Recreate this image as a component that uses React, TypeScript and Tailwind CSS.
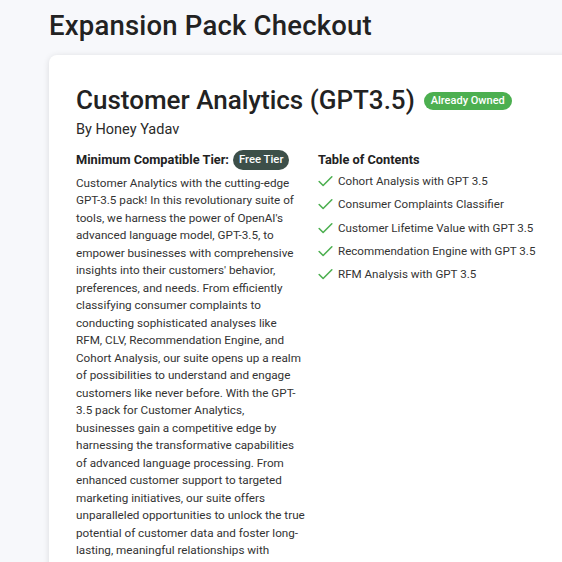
import React from 'react'
import { Check } from 'lucide-react'

const contents = [
  'Cohort Analysis with GPT 3.5',
  'Consumer Complaints Classifier',
  'Customer Lifetime Value with GPT 3.5',
  'Recommendation Engine with GPT 3.5',
  'RFM Analysis with GPT 3.5',
]

// broken where the original layout wraps
const descriptionLines = [
  'Customer Analytics with the cutting-edge',
  'GPT-3.5 pack! In this revolutionary suite of',
  "tools, we harness the power of OpenAI's",
  'advanced language model, GPT-3.5, to',
  'empower businesses with comprehensive',
  "insights into their customers' behavior,",
  'preferences, and needs. From efficiently',
  'classifying consumer complaints to',
  'conducting sophisticated analyses like',
  'RFM, CLV, Recommendation Engine, and',
  'Cohort Analysis, our suite opens up a realm',
  'of possibilities to understand and engage',
  'customers like never before. With the GPT-',
  '3.5 pack for Customer Analytics,',
  'businesses gain a competitive edge by',
  'harnessing the transformative capabilities',
  'of advanced language processing. From',
  'enhanced customer support to targeted',
  'marketing initiatives, our suite offers',
  'unparalleled opportunities to unlock the true',
  'potential of customer data and foster long-',
  'lasting, meaningful relationships with',
  'their customers.',
]

export default function App() {
  return (
    <div
      className="h-[562px] w-[562px] overflow-hidden bg-[#f7f8fb] text-[#1f1f1f]"
      style={{ fontFamily: 'Roboto, "Noto Sans", sans-serif' }}
    >
      <div className="pl-[49px] pt-[8px]">
        <h1 className="text-[27.5px] font-medium leading-[36px] tracking-[0.2px] text-[#222]">
          Expansion Pack Checkout
        </h1>

        {/* Card */}
        <div className="mt-[11px] w-[540px] rounded-lg bg-white px-[27px] pt-[28px] pb-8 shadow-[0_1px_6px_rgba(0,0,0,0.12)]">
          <div className="flex items-center gap-[9px]">
            <h2 className="text-[26px] font-medium leading-[34px] text-[#222]">
              Customer Analytics (GPT3.5)
            </h2>
            <span className="mt-[2px] rounded-full bg-[#4caf50] px-[7px] py-[2px] text-[11px] font-medium leading-[14px] text-white">
              Already Owned
            </span>
          </div>
          <p className="mt-[3px] text-[14.5px] leading-[20px] text-[#2a2a2a]">By Honey Yadav</p>

          <div className="mt-[10px] flex gap-[12px]">
            <div className="w-[230px] shrink-0">
              <div className="flex items-center gap-1">
                <span className="text-[12.8px] font-bold text-[#222]">Minimum Compatible Tier:</span>
                <span className="rounded-full bg-[#3d4f49] px-[6px] py-[2px] text-[11.3px] font-medium leading-[16px] text-white">
                  Free Tier
                </span>
              </div>
              <p className="mt-[5px] whitespace-nowrap text-[11.7px] leading-[17.48px] text-[#333]">
                {descriptionLines.map((line, i) => (
                  <React.Fragment key={i}>
                    {line}
                    {i < descriptionLines.length - 1 && <br />}
                  </React.Fragment>
                ))}
              </p>
            </div>

            <div className="flex-1 whitespace-nowrap">
              <h3 className="pt-[1px] text-[12.8px] font-bold leading-[18px] text-[#222]">Table of Contents</h3>
              <ul className="mt-[1px]">
                {contents.map((item) => (
                  <li key={item} className="flex h-[23.3px] items-center gap-[3px] text-[11.6px] text-[#333]">
                    <Check className="-ml-[2px] h-[19px] w-[19px] text-[#4caf50]" strokeWidth={2} />
                    <span>{item}</span>
                  </li>
                ))}
              </ul>
            </div>
          </div>
        </div>
      </div>
    </div>
  )
}
